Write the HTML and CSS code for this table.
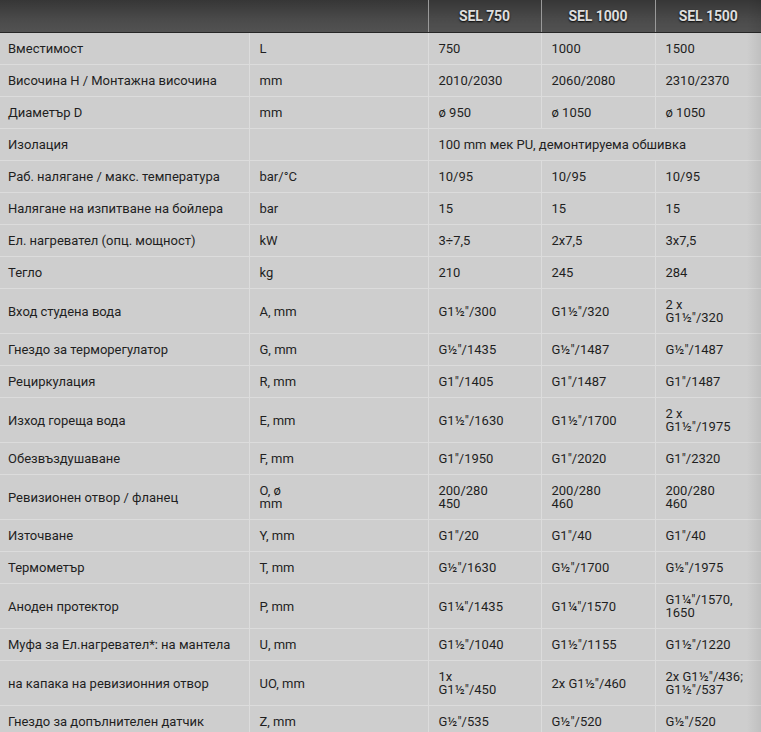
FILE: index.html
```
<!DOCTYPE html>
<html lang="bg">
<head>
<meta charset="utf-8">
<title>SEL</title>
<link rel="stylesheet" href="styles.css">
</head>
<body>
<div class="wrap">
<table class="spec">
<colgroup>
<col class="c-name"><col class="c-unit"><col class="c-m"><col class="c-m2"><col class="c-m3">
</colgroup>
<thead>
<tr>
<th colspan="2" class="blank"></th>
<th>SEL 750</th>
<th>SEL 1000</th>
<th>SEL 1500</th>
</tr>
</thead>
<tbody>
<tr><td>Вместимост</td><td>L</td><td>750</td><td>1000</td><td>1500</td></tr>
<tr><td>Височина H / Монтажна височина</td><td>mm</td><td>2010/2030</td><td>2060/2080</td><td>2310/2370</td></tr>
<tr><td>Диаметър D</td><td>mm</td><td>ø 950</td><td>ø 1050</td><td>ø 1050</td></tr>
<tr><td>Изолация</td><td></td><td colspan="3">100 mm мек PU, демонтируема обшивка</td></tr>
<tr><td>Раб. налягане / макс. температура</td><td>bar/°C</td><td>10/95</td><td>10/95</td><td>10/95</td></tr>
<tr><td>Налягане на изпитване на бойлера</td><td>bar</td><td>15</td><td>15</td><td>15</td></tr>
<tr><td>Ел. нагревател (опц. мощност)</td><td>kW</td><td>3÷7,5</td><td>2x7,5</td><td>3x7,5</td></tr>
<tr><td>Тегло</td><td>kg</td><td>210</td><td>245</td><td>284</td></tr>
<tr><td>Вход студена вода</td><td>A, mm</td><td>G1½"/300</td><td>G1½"/320</td><td>2 x<br>G1½"/320</td></tr>
<tr><td>Гнездо за терморегулатор</td><td>G, mm</td><td>G½"/1435</td><td>G½"/1487</td><td>G½"/1487</td></tr>
<tr><td>Рециркулация</td><td>R, mm</td><td>G1"/1405</td><td>G1"/1487</td><td>G1"/1487</td></tr>
<tr><td>Изход гореща вода</td><td>E, mm</td><td>G1½"/1630</td><td>G1½"/1700</td><td>2 x<br>G1½"/1975</td></tr>
<tr><td>Обезвъздушаване</td><td>F, mm</td><td>G1"/1950</td><td>G1"/2020</td><td>G1"/2320</td></tr>
<tr><td>Ревизионен отвор / фланец</td><td>O, ø<br>mm</td><td>200/280<br>450</td><td>200/280<br>460</td><td>200/280<br>460</td></tr>
<tr><td>Източване</td><td>Y, mm</td><td>G1"/20</td><td>G1"/40</td><td>G1"/40</td></tr>
<tr><td>Термометър</td><td>T, mm</td><td>G½"/1630</td><td>G½"/1700</td><td>G½"/1975</td></tr>
<tr><td>Аноден протектор</td><td>P, mm</td><td>G1¼"/1435</td><td>G1¼"/1570</td><td>G1¼"/1570,<br>1650</td></tr>
<tr><td>Муфа за Ел.нагревател*: на мантела</td><td>U, mm</td><td>G1½"/1040</td><td>G1½"/1155</td><td>G1½"/1220</td></tr>
<tr><td>на капака на ревизионния отвор</td><td>UO, mm</td><td>1x<br>G1½"/450</td><td>2x G1½"/460</td><td>2x G1½"/436;<br>G1½"/537</td></tr>
<tr><td>Гнездо за допълнителен датчик</td><td>Z, mm</td><td>G½"/535</td><td>G½"/520</td><td>G½"/520</td></tr>
</tbody>
</table>
</div>
</body>
</html>
```
FILE: styles.css
```
html, body {
  margin: 0;
  padding: 0;
  background: #cdcdcd;
}
.wrap {
  position: relative;
  width: 761px;
  overflow: hidden;
}
.wrap::after {
  content: "";
  position: absolute;
  top: 0;
  right: 0;
  bottom: 0;
  width: 14px;
  background: linear-gradient(to right, rgba(0,0,0,0), rgba(0,0,0,0.07));
  pointer-events: none;
}
.spec {
  width: 761px;
  table-layout: fixed;
  border-collapse: collapse;
  font-family: Roboto, "Liberation Sans", sans-serif;
  font-size: 13px;
  color: #1f1f1f;
}
.c-name { width: 249px; }
.c-unit { width: 179px; }
.c-m { width: 113px; }
.c-m2 { width: 114px; }
.c-m3 { width: 106px; }
.spec th {
  height: 32px;
  padding: 0;
  background: linear-gradient(#363636, #4a4a4a 60%, #525252);
  border-bottom: 1px solid #262626;
  border-left: 1px solid #9a9a9a;
  color: #dedede;
  font-weight: 700;
  font-size: 14px;
  text-align: center;
  text-shadow: 0 1px 2px #000;
  letter-spacing: -0.1px;
}
.spec th.blank { border-left: none; }
.spec td {
  padding: 9px 10px 9px 10px;
  line-height: 13px;
  vertical-align: middle;
  border-bottom: 1px solid #dcdcdc;
  border-left: 1px solid #dcdcdc;
  background: #cecece;
}
.spec td:first-child {
  border-left: none;
  padding-left: 8px;
}
```
